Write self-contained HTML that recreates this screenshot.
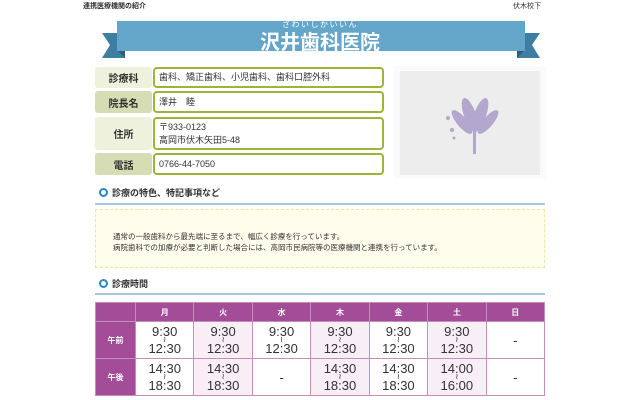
<!DOCTYPE html>
<html><head><meta charset="utf-8"><style>
*{margin:0;padding:0;box-sizing:border-box}
body{width:640px;height:400px;background:#fff;font-family:"Liberation Sans","Noto Sans CJK JP",sans-serif;color:#333;position:relative;overflow:hidden}
.a{position:absolute}
.lab{position:absolute;left:95px;width:57px;display:flex;align-items:center;justify-content:center;font-size:10px;font-weight:bold;color:#333;border-radius:3px}
.val{position:absolute;left:153px;width:231px;border:2px solid #9ab53a;border-radius:4px;background:#fff;font-size:9px;padding:0 4px;display:flex;flex-direction:column;justify-content:center;line-height:13px}
.h{position:absolute;left:99px;font-size:9px;font-weight:bold;display:flex;align-items:center}
.h i{display:inline-block;width:9px;height:9px;border:2.5px solid #2a88c0;border-radius:50%;margin-right:4px}
.line{position:absolute;left:95px;width:450px;height:2px;background:#a9c6d8}
table{position:absolute;left:95px;top:302px;width:450px;border-collapse:collapse;font-size:13px;table-layout:fixed}
td,th{border:1px solid #c58cbd;text-align:center}
th{background:#a34d99;color:#fff;font-size:8px;height:19px}
td.l{background:#a34d99;color:#fff;font-size:8px;font-weight:bold}
td{line-height:11px;height:37px}
td.p{background:#f7eef6}
small{font-size:8px;display:block;line-height:6px}
</style></head><body>
<div class="a" style="left:83px;top:1px;font-size:7px;font-weight:bold">連携医療機関の紹介</div>
<div class="a" style="left:513px;top:1px;font-size:7px">伏木校下</div>
<svg class="a" style="left:100px;top:20px" width="442" height="40">
<polygon points="2,13 25,13 25,38 2,38 10,25" fill="#3d7ea2"/>
<polygon points="440,13 417,13 417,38 440,38 432,25" fill="#3d7ea2"/>
<polygon points="17,30 25,38 25,30" fill="#2b5e7a"/>
<polygon points="425,30 417,38 417,30" fill="#2b5e7a"/>
<rect x="17" y="1" width="408" height="30" fill="#63a6ca"/>
</svg>
<div class="a" style="left:260px;top:19px;width:120px;text-align:center;font-size:8px;color:#fff;letter-spacing:1.5px">さわいしかいいん</div>
<div class="a" style="left:240px;top:26px;width:160px;text-align:center;font-size:20px;font-weight:bold;color:#fff">沢井歯科医院</div>

<div class="lab" style="top:67px;height:21px;background:#eef2dc">診療科</div>
<div class="val" style="top:67px;height:21px">歯科、矯正歯科、小児歯科、歯科口腔外科</div>
<div class="lab" style="top:91px;height:22px;background:#d6dcb3">院長名</div>
<div class="val" style="top:91px;height:22px">澤井　睦</div>
<div class="lab" style="top:117px;height:33px;background:#eef2dc">住所</div>
<div class="val" style="top:117px;height:33px"><div>〒933-0123</div><div>高岡市伏木矢田5-48</div></div>
<div class="lab" style="top:153px;height:22px;background:#d6dcb3">電話</div>
<div class="val" style="top:153px;height:22px">0766-44-7050</div>

<div class="a" style="left:394px;top:66px;width:152px;height:112px;background:#fafafa"></div>
<div class="a" style="left:400px;top:71px;width:140px;height:104px;background:#ededed"></div>
<svg class="a" style="left:440px;top:90px" width="70" height="70">
<g fill="#a99bc9" opacity=".85">
<ellipse cx="30" cy="25" rx="6" ry="18" transform="rotate(-20 30 25)"/>
<ellipse cx="40" cy="25" rx="6" ry="18" transform="rotate(20 40 25)"/>
<ellipse cx="22" cy="32" rx="5" ry="15" transform="rotate(-40 22 32)"/>
<ellipse cx="48" cy="32" rx="5" ry="15" transform="rotate(40 48 32)"/>
<rect x="33" y="40" width="3" height="24"/>
<circle cx="8" cy="28" r="2"/><circle cx="12" cy="40" r="2"/><circle cx="14" cy="48" r="1.5"/>
</g></svg>

<div class="h" style="top:186px"><i></i>診療の特色、特記事項など</div>
<div class="line" style="top:203px"></div>
<div class="a" style="left:95px;top:209px;width:450px;height:59px;background:#fffdeb;border:1px dashed #ece7a0;font-size:7.5px;line-height:11px;padding:21px 0 0 17px">通常の一般歯科から最先端に至るまで、幅広く診療を行っています。<br>病院歯科での加療が必要と判断した場合には、高岡市民病院等の医療機関と連携を行っています。</div>
<div class="h" style="top:277px"><i></i>診療時間</div>
<div class="line" style="top:293px"></div>
<table>
<colgroup><col style="width:40px"><col><col><col><col><col><col><col></colgroup>
<tr><th></th><th>月</th><th>火</th><th>水</th><th>木</th><th>金</th><th>土</th><th>日</th></tr>
<tr><td class="l">午前</td><td>9:30<small>≀</small>12:30</td><td class="p">9:30<small>≀</small>12:30</td><td>9:30<small>≀</small>12:30</td><td class="p">9:30<small>≀</small>12:30</td><td>9:30<small>≀</small>12:30</td><td class="p">9:30<small>≀</small>12:30</td><td>-</td></tr>
<tr><td class="l">午後</td><td>14:30<small>≀</small>18:30</td><td class="p">14:30<small>≀</small>18:30</td><td>-</td><td class="p">14:30<small>≀</small>18:30</td><td>14:30<small>≀</small>18:30</td><td class="p">14:00<small>≀</small>16:00</td><td>-</td></tr>
</table>
</body></html>
